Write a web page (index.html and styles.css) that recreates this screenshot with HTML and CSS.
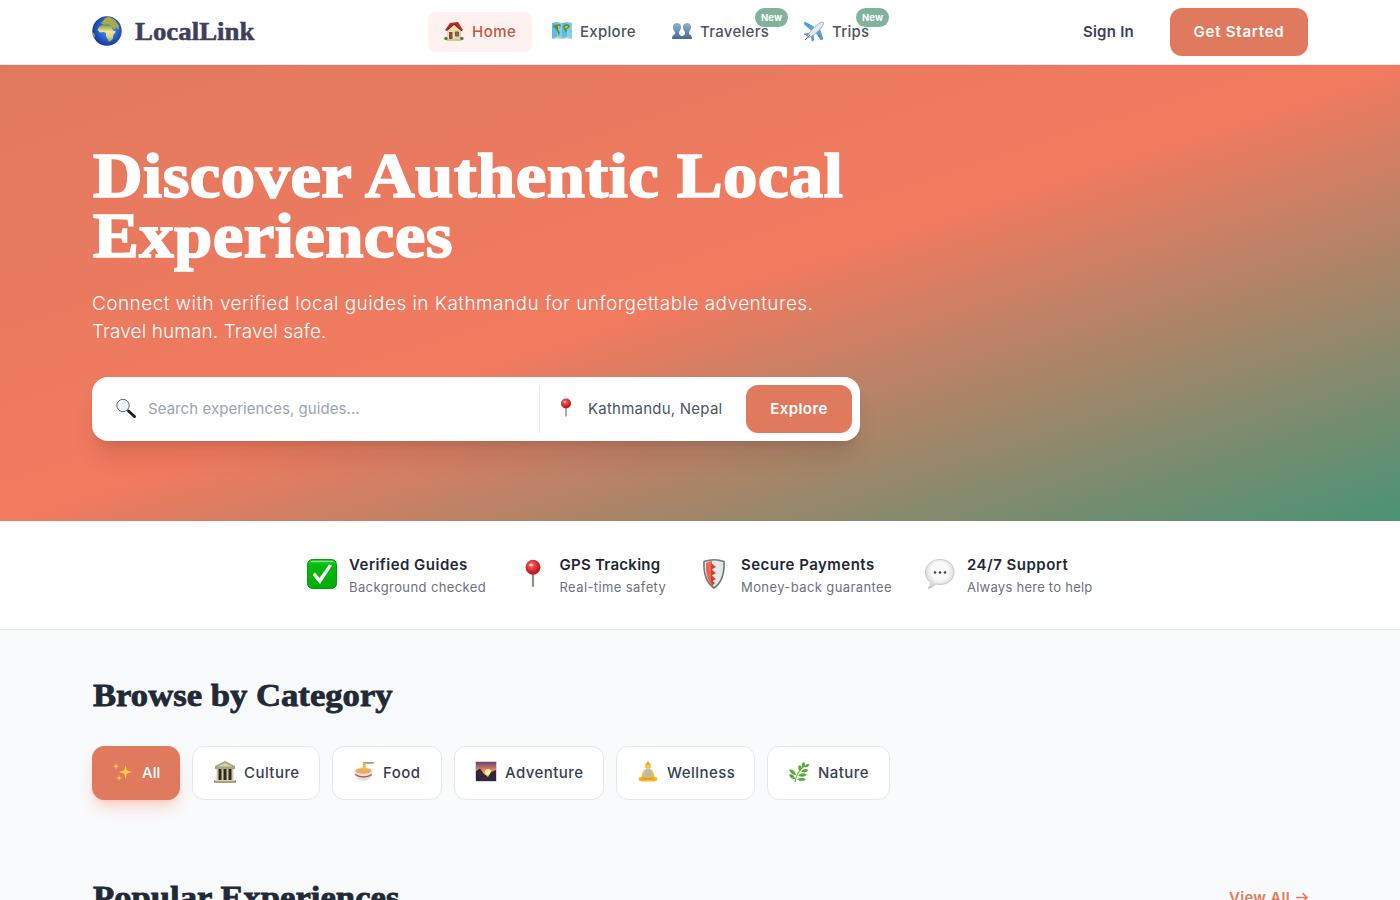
FILE: index.html
```html
<!DOCTYPE html>
<html lang="en">
<head>
<meta charset="utf-8">
<title>LocalLink</title>
<link rel="stylesheet" href="styles.css">
</head>
<body>
<header class="header">
  <div class="container header-row">
    <a class="brand">
      <svg class="globe" viewBox="0 0 30 30"><defs><radialGradient id="sea" cx=".55" cy=".45" r=".55"><stop offset="0" stop-color="#65aef0"/><stop offset=".5" stop-color="#2f6ddd"/><stop offset="1" stop-color="#173a99"/></radialGradient><linearGradient id="land" x2="0" y2="1"><stop offset="0" stop-color="#8d9f2f"/><stop offset=".4" stop-color="#f0e69b"/><stop offset=".7" stop-color="#dfd680"/><stop offset="1" stop-color="#a3aa45"/></linearGradient></defs><circle cx="15" cy="15" r="14.700" fill="url(#sea)"/><path fill="url(#land)" d="M7 11l3-2 5 .5 4 1 2 4 3 1-3 4v3l-3 3-1.500-.5L14 20v-3l-2-1-4 .5L5.500 14z"/><path fill="#a9ac43" d="M9 7l2-2 2-3 4-1.300 6 3.300 4 6-.5 4-2.500-3-1 3-2-2-2-1-1-2-3-1-3 1zM.5 16l2 2 .5 3-1 1z"/></svg>
      <span class="brand-name">LocalLink</span>
    </a>
    <nav class="nav">
      <a class="nav-item nav-home"><svg class="ico" viewBox="0 0 20 20"><path fill="#f0dfad" d="M3 9l4-5 9 3 1 11H3z"/><path fill="#e6d09c" d="M10 9h7v9h-7z"/><path fill="#b72d2b" d="M1 9L6 2l8-1 5 8-1.500 1L10 4 3 10z"/><path d="M3 9l7-6 7.500 6.500" stroke="#7b2022" fill="none"/><path fill="#8c4a2c" d="M5 11h3.500v7H5z"/><path fill="#4b7ea6" stroke="#75583c" d="M11.500 11h3v4h-3z"/><circle cx="2" cy="17.500" r="1.700" fill="#4d842c"/><circle cx="17.800" cy="17.500" r="1.800" fill="#4d842c"/><path d="M3 19h14" stroke="#9a9580"/></svg><span>Home</span></a>
      <a class="nav-item nav-explore"><svg class="ico" viewBox="0 0 20 20"><path fill="#5bbce9" d="M0 2l5-1 5 1 5-1 5 1v16l-5-1-5 1-5-1-5 1z"/><path fill="#a5dff4" d="M5 1l5 1v16l-5-1zM15 1l5 1v16l-5-1z" opacity=".5"/><path fill="#638a35" d="M2 4l6-1 1 2-2 2-1 2 2 2-1 4-2-5-2-3-2-1zM11 5l3-2 4 1-1 3-2 1-1 4-2-4z"/><path fill="#ebcb4c" d="M6 5l2 0-2 3zM13 5l3 0-2 3z"/><path d="M0 17.500l5-1 5 1 5-1 5 1" stroke="#d9d2b6" fill="none"/></svg><span>Explore</span></a>
      <a class="nav-item nav-travelers"><svg class="ico" viewBox="0 0 20 20"><defs><linearGradient id="people" x2="0" y2="1"><stop stop-color="#91b3ce"/><stop offset="1" stop-color="#456b92"/></linearGradient></defs><path fill="url(#people)" d="M5 2c5 0 5 6 2 9v2l2 2h2l2-2v-2C10 8 10 2 15 2s5 6 2 9v2c2 1 3 2 3 5H0c0-3 1-4 3-5v-2C0 8 0 2 5 2z"/></svg><span>Travelers</span><b class="badge">New</b></a>
      <a class="nav-item nav-trips"><svg class="ico" viewBox="0 0 20 20"><path fill="#42ade8" stroke="#2878ac" stroke-width=".5" d="M10 6L1 1 0 3l7 6zM11 10l6 9 2-1-4-12zM6 12l-6 1 5 3zM7 14l1 6 2-1-1-6z"/><path fill="#e6e7eb" stroke="#8f929b" stroke-width=".7" d="M3 17C3 13 13 2 18 1c2 0 2 1 1 3-2 5-12 13-16 13z"/><path d="M1 19l5-5" stroke="#a55f58"/><path d="M5 3L4 5.500M17 14l-3 1" stroke="#778796" stroke-width="2"/></svg><span>Trips</span><b class="badge">New</b></a>
    </nav>
    <div class="actions"><a class="sign-in">Sign In</a><a class="btn get-started">Get Started</a></div>
  </div>
</header>
<section class="hero">
  <div class="container">
    <h1><span class="wide">Discover Authentic Local</span><br><span class="wide">Experiences</span></h1>
    <p class="lead"><span class="lead-first">Connect with verified local guides in Kathmandu for unforgettable adventures.</span><br><span class="lead-second">Travel human. Travel safe.</span></p>
    <div class="search">
      <div class="search-query"><svg class="ico" viewBox="0 0 20 20"><path d="M12.500 12l6 5.500" stroke="#1b2023" stroke-width="3" stroke-linecap="round"/><circle cx="7" cy="6.500" r="6.200" fill="#eff3f5" stroke="#606d75"/><path d="M3 5.500q1-3 4-3" stroke="#fff" fill="none" stroke-width="1.500"/></svg><span>Search experiences, guides...</span></div>
      <div class="search-place"><svg class="ico" viewBox="0 0 20 20"><use href="#pushpin" y="-1"/></svg><span>Kathmandu, Nepal</span></div>
      <a class="btn search-btn">Explore</a>
    </div>
  </div>
</section>
<section class="trust">
  <div class="trust-item trust-guides"><svg class="ico-lg" viewBox="0 0 30 30"><defs><linearGradient id="check" x2="0" y2="1"><stop stop-color="#31d13c"/><stop offset=".2" stop-color="#08b90f"/><stop offset="1" stop-color="#02ac06"/></linearGradient></defs><rect x=".5" y=".5" width="29" height="29" rx="5" fill="url(#check)" stroke="#079c0a"/><path d="M4 2.500h22" stroke="#83e689"/><path d="M5.500 16l2.500-2.500 4.500 5.500L22 5.500l3 1-12 18.500z" fill="#fff"/></svg><div><strong>Verified Guides</strong><small>Background checked</small></div></div>
  <div class="trust-item trust-gps"><svg class="ico-lg" viewBox="0 0 20 20"><defs><radialGradient id="pinhead" cx=".4" cy=".35"><stop stop-color="#ff9a92"/><stop offset=".35" stop-color="#e84e4c"/><stop offset="1" stop-color="#c01f26"/></radialGradient><g id="pushpin"><path d="M10 8v10.500" stroke="#9b8c82" stroke-width="1.500"/><circle cx="10" cy="5.500" r="5" fill="url(#pinhead)"/><ellipse cx="8.700" cy="4" rx="1.300" ry=".8" fill="#ffc8c2"/></g></defs><use href="#pushpin"/></svg><div><strong>GPS Tracking</strong><small>Real-time safety</small></div></div>
  <div class="trust-item trust-pay"><svg class="ico-lg" viewBox="0 0 30 30"><path fill="#e3e7e8" stroke="#737777" stroke-width="1.600" d="M5 2.500Q15-1 25 2.500q1 19-10 26.500Q4 21.500 5 2.500z"/><path fill="#ee6650" d="M7 4q4-2 6-2v25Q6 19 7 4z"/><path fill="#c8452f" d="M12 4l5 4-5 3zM12 10l5 4-5 3zM12 16l5 4-5 3zM12 21l4 3-3 3z"/></svg><div><strong>Secure Payments</strong><small>Money-back guarantee</small></div></div>
  <div class="trust-item trust-help"><svg class="ico-lg" viewBox="0 0 30 30"><defs><radialGradient id="bubble" cx=".5" cy=".4" r=".6"><stop offset=".5" stop-color="#f9f9f9"/><stop offset="1" stop-color="#cecece"/></radialGradient></defs><path fill="url(#bubble)" stroke="#b7b7b7" stroke-width=".7" d="M15 .5c18 0 19 24 1 25l-5-.5q-4 4-8 4.500 3-3 3-6C-4 17 0 .5 15 .5z"/><g fill="#414141"><circle cx="10" cy="13.500" r="1.300"/><circle cx="15" cy="13.500" r="1.300"/><circle cx="20" cy="13.500" r="1.300"/></g></svg><div><strong>24/7 Support</strong><small>Always here to help</small></div></div>
</section>
<main class="container">
  <section class="categories">
    <h2><span class="wide">Browse by Category</span></h2>
    <div class="chips">
      <a class="chip chip-all"><svg class="ico" viewBox="0 0 20 20"><path fill="#ffd23d" d="M12.500 3l1.200 5.300L19 10l-5.300 1.700L12.500 17l-1.200-5.300L6 10l5.300-1.700zM3 1l.7 2.500L6 4.300 3.700 5 3 7.500 2.300 5 0 4.300l2.300-.8zM6 13l.7 2.300 2.300.7-2.300.7L6 19l-.7-2.300L3 16l2.300-.7z"/></svg><span>All</span></a>
      <a class="chip chip-culture"><svg class="ico" viewBox="0 0 22 22"><path fill="#aaa380" d="M1 5L11 0l10 5v3H1zM0 19h22v3H0z"/><path fill="#d9d1b0" d="M3 5.500L11 2l8 3.500zM1 19h20v1H1z"/><path fill="#2d291d" d="M3 8h16v11H3z"/><path stroke="#d1c9a5" stroke-width="2" d="M3.500 8v11M8.500 8v11M13.500 8v11M18.500 8v11"/></svg><span>Culture</span></a>
      <a class="chip chip-food"><svg class="ico" viewBox="0 0 20 20"><ellipse cx="9.500" cy="9" rx="9" ry="3.600" fill="#dfd6c9"/><ellipse cx="9.500" cy="9" rx="7.500" ry="2.700" fill="#eeaa55"/><path d="M9 .5h11M9 2l11-1" stroke="#c29a71" stroke-width="1"/><path d="M9.500 1v8M11 1.500V9" stroke="#f0b848" stroke-width="1.500"/><path fill="#dedfe0" d="M.5 9.500q9 5 18 0c0 5-3 7.500-5 8.500q-4 1-8 0c-2-1-5-3.500-5-8.500z"/><path d="M1 12.500q8.500 5 17 0" stroke="#cc5041" fill="none" stroke-width="1.300"/></svg><span>Food</span></a>
      <a class="chip chip-adventure"><svg class="ico" viewBox="0 0 20 20"><defs><linearGradient id="sky" x2="0" y2="1"><stop stop-color="#683675"/><stop offset=".5" stop-color="#f39854"/><stop offset="1" stop-color="#ffe36e"/></linearGradient></defs><path fill="url(#sky)" stroke="#d6d6dd" d="M-.5-.5h21v20h-21z"/><circle cx="12" cy="10" r="3" fill="#fff1a1"/><path fill="#30273a" d="M0 9l4-2.500L8 12l4 3 3-5 5-2v11H0z"/></svg><span>Adventure</span></a>
      <a class="chip chip-wellness"><svg class="ico" viewBox="0 0 20 20"><path fill="#f6bc35" d="M7 7.500h6l2.500 3 1 4 2.500 1 .7 2.500-2.700 1.500H3L.3 18 1 15.500l2.500-1 1-4z"/><path fill="#b4b8bf" d="M6.500 8L9 7q1 1 2 0l2.500 1-.5 7H7z"/><path d="M4 15.500l6 1.500 6-1.500M2.500 18l7-1.500 7 1.500" stroke="#d58e20" fill="none" stroke-width=".8"/><circle cx="10" cy="4" r="3" fill="#f7c441"/><path fill="#e29b23" d="M7.200 3C8 .3 12 .3 12.800 3Q10 1.500 7.200 3z"/><circle cx="10" cy=".7" r="1.200" fill="#eeaa2c"/></svg><span>Wellness</span></a>
      <a class="chip chip-nature"><svg class="ico" viewBox="0 0 20 20"><path d="M6 20q1-9 10-17" stroke="#83b944" fill="none" stroke-width="1.200"/><g fill="#57ad3c"><path d="M13 6q-1-5 2-6 3 4-2 6zM15 5q3-4 5-3 0 4-5 3zM10 9Q8 4 11 3q4 4-1 6zM12 9.500q3-4 7.500-1.500-2 4-7.500 1.500zM9 13.500q4-4 9-1-4 4-9 1zM7 13Q2 13 0 7.500q6-.5 7 5.500zM6 17q-5 0-6-4.500 5-1 6 4.500zM8 17.500q5-3.500 9 0-4 3-9 0z"/></g></svg><span>Nature</span></a>
    </div>
  </section>
  <section class="popular"><h2><span class="wide">Popular Experiences</span></h2><a class="view-all"><span>View All</span><svg viewBox="0 0 12 12"><path d="M0 5.500h11M6.500 1L11 5.500 6.500 10" fill="none" stroke="currentColor" stroke-width="1.700"/></svg></a></section>
</main>
</body>
</html>
```
FILE: styles.css
```css
* { box-sizing: border-box; }
body { margin: 0; height: 900px; overflow: hidden; background: #f9fafb; color: #1f2937; font: 400 15px/24px Inter, sans-serif; }
a { display: flex; align-items: center; white-space: nowrap; }
svg { flex: none; display: block; overflow: visible; }
h1, h2, p { margin: 0; }
.container { width: 1216px; margin: 0 auto; }
.ico { width: 20px; height: 20px; }
.ico-lg { width: 30px; height: 30px; }
.wide { display: inline-block; transform: scaleX(1.1); transform-origin: 0 50%; }
.header { height: 65px; background: #fff; border-bottom: 1px solid #e5e7eb; }
.header-row { height: 64px; display: grid; grid-template-columns: 336px 1fr auto; align-items: center; }
.brand { gap: 13px; }
.globe { width: 30px; height: 30px; margin-top: -2px; }
.brand-name { font: 700 25px/32px "Liberation Serif", serif; color: #3d405b; transform: scaleX(1.075); transform-origin: 0 50%; -webkit-text-stroke: .5px #3d405b; }
.nav { display: flex; gap: 4px; }
.nav-item { position: relative; height: 40px; padding-left: 16px; gap: 8px; border-radius: 8px; font-weight: 500; letter-spacing: .28px; color: #4b5563; }
.nav-item .ico { margin-top: -2px; }
.nav-home { width: 104px; background: #fef2f0; color: #c8553d; letter-spacing: .5px; }
.nav-explore { width: 116px; }
.nav-travelers { width: 128px; }
.nav-trips { width: 97px; }
.badge { position: absolute; top: -4px; right: -4px; width: 33px; height: 19px; border-radius: 10px; background: #81b29a; color: #fff; font-size: 9.500px; line-height: 19px; text-align: center; letter-spacing: .1px; }
.actions { display: flex; align-items: center; gap: 36px; }
.sign-in { font-weight: 600; color: #3d405b; letter-spacing: .25px; }
.btn { height: 48px; justify-content: center; border-radius: 12px; background: #e07a5f; color: #fff; font-weight: 600; letter-spacing: .45px; }
.get-started { width: 138px; letter-spacing: .75px; }
.hero { height: 456px; padding: 80px 0; background: linear-gradient(to bottom right, #e07a5f 0%, #f27a5f 50%, #4a9375 100%); }
h1 { padding: 1px 0 0 1px; height: 120px; font: 700 62.500px/60px "Liberation Serif", serif; color: #fff; white-space: nowrap; -webkit-text-stroke: 1.700px #fff; letter-spacing: .4px; }
.lead { padding-top: 1px; height: 56px; margin: 24px 0 32px; font-size: 19px; line-height: 28px; font-weight: 300; color: #fff; white-space: nowrap; }
.lead-first { letter-spacing: .44px; }
.lead-second { letter-spacing: .1px; }
.search { width: 768px; height: 64px; padding: 8px; display: flex; border-radius: 16px; background: #fff; box-shadow: 0 20px 25px -5px rgba(0,0,0,.1), 0 8px 10px -6px rgba(0,0,0,.1); }
.search-query { flex: 1; display: flex; align-items: center; padding-left: 16px; gap: 12px; color: #9ca3af; letter-spacing: .06px; }
.search-place { width: 207px; display: flex; align-items: center; padding-left: 16px; gap: 12px; border-left: 1px solid #e5e7eb; color: #4b5563; white-space: nowrap; letter-spacing: .23px; }
.search-btn { width: 106px; }
.trust { height: 109px; padding: 32px 0 32px 307px; display: flex; background: #fff; border-bottom: 1px solid #e5e7eb; white-space: nowrap; }
.trust-item { display: flex; gap: 12px; }
.trust-item .ico-lg { margin-top: 6px; }
.trust-guides { width: 210.500px; }
.trust-gps { width: 181.500px; }
.trust-pay { width: 226px; }
.trust strong, .trust small { display: block; }
.trust strong { font-weight: 600; letter-spacing: .48px; }
.trust .trust-gps strong { letter-spacing: .27px; }
.trust small { font-size: 13px; line-height: 20px; letter-spacing: .4px; color: #6b7280; }
.trust .trust-help small { letter-spacing: .25px; }
.categories { padding-top: 48px; }
h2 { padding-left: 1px; font: 700 31.500px/36px "Liberation Serif", serif; color: #1f2937; -webkit-text-stroke: .8px #1f2937; white-space: nowrap; }
.chips { display: flex; gap: 12px; margin-top: 32px; }
.chip { height: 54px; padding-left: 21px; gap: 8px; border: 1px solid #e5e7eb; border-radius: 12px; background: #fff; color: #374151; font-weight: 500; letter-spacing: .45px; }
.chip .ico { margin-top: -2px; }
.chip-all { width: 88px; padding-left: 20px; gap: 9px; background: #e07a5f; border-color: #e07a5f; color: #fff; letter-spacing: 0; box-shadow: 0 10px 15px -3px rgba(244,123,96,.3), 0 4px 6px -4px rgba(244,123,96,.3); }
.chip-culture { width: 128px; }
.chip-culture .ico { width: 22px; height: 22px; }
.chip-food { width: 110px; gap: 9px; }
.chip-adventure { width: 150px; gap: 9px; }
.chip-wellness { width: 139px; gap: 9px; }
.chip-nature { width: 123px; gap: 9px; }
.popular { display: flex; justify-content: space-between; align-items: center; margin-top: 80px; }
.view-all { gap: 6px; color: #e07a5f; font-weight: 600; letter-spacing: .3px; }
.view-all svg { width: 12px; height: 12px; }
```
